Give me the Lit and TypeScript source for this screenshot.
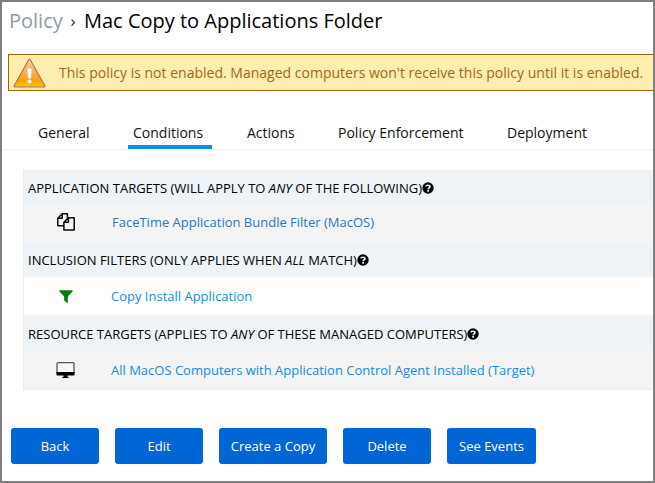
import { LitElement, html, css } from "lit";
import { customElement } from "lit/decorators.js";
import { classMap } from "lit/directives/class-map.js";

const warningIcon = html`<svg class="warning" width="33" height="30" viewBox="0 0 32 30" preserveAspectRatio="none">
  <defs>
    <linearGradient id="amber" x1="0" y1="0" x2="0" y2="1">
      <stop offset="0" stop-color="#f6cfa0"></stop>
      <stop offset="0.5" stop-color="#f2ae55"></stop>
      <stop offset="0.75" stop-color="#fa9f08"></stop>
      <stop offset="1" stop-color="#ffc31c"></stop>
    </linearGradient>
  </defs>
  <path d="M15.4 1.4 H16.6 L31 28 Q31 29 30.4 29 L1.6 29 Q1 29 1 28 Z" fill="url(#amber)" stroke="#b5714a" stroke-width="1.1" stroke-linejoin="round"></path>
  <path d="M13.9 10.5 h4.2 l-.6 10 h-3 Z" fill="#fff"></path>
  <circle cx="16" cy="23.4" r="2" fill="#fff"></circle>
</svg>`;

const helpIcon = html`<svg class="help" width="12" height="12" viewBox="0 0 11 11">
  <circle cx="5.5" cy="5.5" r="5.2" fill="#000"></circle>
  <path d="M3.6 4.1 C3.8 2.7 7.4 2.4 7.3 4.3 C7.2 5.5 5.6 5.3 5.6 6.6" fill="none" stroke="#fff" stroke-width="1.5"></path>
  <rect x="4.8" y="7.4" width="1.6" height="1.5" fill="#fff"></rect>
</svg>`;

const icons = {
  copy: html`<svg width="18" height="18" viewBox="0 0 18 18" fill="none" stroke="#0a0a0a" stroke-width="1.5" stroke-linejoin="round">
    <path d="M6.9 12.7 H.8 V5.2 L5.2 .8 H10.4 V4.8 M5.2 .8 V5.2 H.8"></path>
    <path d="M11.4 4.8 H17.2 V17.1 H6.9 V9.3 Z M11.4 4.8 V9.3 H6.9"></path>
  </svg>`,
  filter: html`<svg width="14" height="14" viewBox="0 0 14 14">
    <path d="M.4 .2 H13.6 V1.5 L8.9 6.3 V13.3 L5.1 10.6 V6.3 L.4 1.5 Z" fill="#008000"></path>
  </svg>`,
  monitor: html`<svg width="19" height="17" viewBox="0 0 19 17">
    <path d="M1 11 V1.6 Q1 .7 2 .7 H17 Q18 .7 18 1.6 V11" fill="#f7f7f7" stroke="#555" stroke-width="1.3"></path>
    <path d="M.4 10 H18.6 V12.4 Q18.6 13.4 17.6 13.4 H1.4 Q.4 13.4 .4 12.4 Z" fill="#000"></path>
    <path d="M7.5 13 H11.5 V15 H12.5 V16 H6.5 V15 H7.5 Z" fill="#000"></path>
  </svg>`,
};

const tabs = [
  { label: "General", key: "general" },
  { label: "Conditions", key: "conditions" },
  { label: "Actions", key: "actions" },
  { label: "Policy Enforcement", key: "enforcement" },
  { label: "Deployment", key: "deployment" },
];

const sections = [
  { before: "APPLICATION TARGETS (WILL APPLY TO ", em: "ANY", after: " OF THE FOLLOWING)", icon: icons.copy, link: "FaceTime Application Bundle Filter (MacOS)", key: "targets" },
  { before: "INCLUSION FILTERS (ONLY APPLIES WHEN ", em: "ALL", after: " MATCH)", icon: icons.filter, link: "Copy Install Application", key: "inclusion" },
  { before: "RESOURCE TARGETS (APPLIES TO ", em: "ANY", after: " OF THESE MANAGED COMPUTERS)", icon: icons.monitor, link: "All MacOS Computers with Application Control Agent Installed (Target)", key: "resources" },
];

const actions = [
  { label: "Back", wide: "" },
  { label: "Edit", wide: "" },
  { label: "Create a Copy", wide: "copy" },
  { label: "Delete", wide: "" },
  { label: "See Events", wide: "events" },
];

@customElement("app-root")
export class AppRoot extends LitElement {
  static styles = css`
    :host {
      display: flex;
      flex-direction: column;
      box-sizing: border-box;
      height: 483px;
      border: 2px solid #808080;
      background: #fff;
      color: #111;
      font-family: "Open Sans", "Noto Sans", sans-serif;
      font-size: 14px;
      overflow: hidden;
      white-space: nowrap;
    }
    svg { display: block; flex: none; }
    .crumbs {
      display: flex;
      align-items: center;
      height: 36px;
      padding-left: 7px;
      margin-bottom: 16px;
      font-size: 20px;
      color: #000;
    }
    .parent { color: #8c9ba5; width: 54px; }
    .chevron { width: 21px; padding-right: 1px; box-sizing: border-box; text-align: center; font-size: 17px; color: #222; }
    .banner {
      display: flex;
      align-items: center;
      box-sizing: border-box;
      height: 37px;
      margin-left: 6px;
      padding-left: 4px;
      gap: 13px;
      border: 1px solid #9c6500;
      border-right: 0;
      background: #ffeeb0;
      color: #a5671c;
      letter-spacing: 0.008px;
    }
    .tabs {
      display: flex;
      height: 56px;
      padding-top: 2px;
      margin-left: 1px;
      border-bottom: 1px solid #eee;
    }
    .tab {
      display: flex;
      align-items: flex-end;
      box-sizing: border-box;
      padding: 0 5px 2px;
      line-height: 20px;
      border-bottom: 4px solid transparent;
    }
    .tab.active { border-bottom-color: #0c92ea; }
    .general { margin-left: 30px; width: 61px; }
    .conditions { margin-left: 34px; width: 84px; }
    .actions { margin-left: 30px; width: 58px; }
    .enforcement { margin-left: 33px; width: 136px; }
    .deployment { margin-left: 33px; }
    .table {
      margin: 20px 0 0 21px;
      border: 1px solid #ebeef0;
      border-right: 0;
      font-size: 13px;
    }
    .head {
      display: flex;
      align-items: center;
      box-sizing: border-box;
      height: 34px;
      padding-left: 4px;
      background: #eef3f7;
      color: #000;
      white-space: pre;
    }
    .row {
      display: flex;
      align-items: center;
      box-sizing: border-box;
      height: 38px;
      background: #f4f4f4;
    }
    .head.section-resources { height: 36px; padding-top: 1px; }
    .row.section-targets { padding-bottom: 4px; }
    .row.section-inclusion { background: #fff; }
    .icon { box-sizing: border-box; width: 87px; padding-right: 4px; display: flex; justify-content: center; }
    .section-targets .icon { padding-right: 3px; }
    .section-inclusion .icon { padding-top: 2px; }
    .link { color: #1a8ae2; text-decoration: none; }
    .section-targets .link { color: #2f78b4; padding-left: 1px; }
    .buttons { display: flex; gap: 16px; margin: 38px 0 0 9px; }
    button {
      width: 88px;
      height: 36px;
      padding: 0;
      border: 0;
      border-radius: 3px;
      background: #0066d6;
      color: #fff;
      font: 400 13px "Open Sans", "Noto Sans", sans-serif;
    }
    button.copy { width: 108px; }
    button.events { width: 89px; }
  `;

  render() {
    return html`
      <div class="crumbs">
        <span class="parent">Policy</span><span class="chevron">›</span><span class="title">Mac Copy to Applications Folder</span>
      </div>
      <div class="banner">
        ${warningIcon}
        <span class="message">This policy is not enabled. Managed computers won't receive this policy until it is enabled.</span>
      </div>
      <nav class="tabs">
        ${tabs.map((t) => html`<span class=${classMap({ tab: true, [t.key]: true, active: t.key === "conditions" })}>${t.label}</span>`)}
      </nav>
      <div class="table">
        ${sections.map(
          (s) => html`
            <div class="head section-${s.key}"><span>${s.before}<em>${s.em}</em>${s.after}</span>${helpIcon}</div>
            <div class="row section-${s.key}"><span class="icon">${s.icon}</span><a class="link">${s.link}</a></div>
          `
        )}
      </div>
      <div class="buttons">
        ${actions.map((a) => html`<button class=${a.wide}>${a.label}</button>`)}
      </div>
    `;
  }
}
